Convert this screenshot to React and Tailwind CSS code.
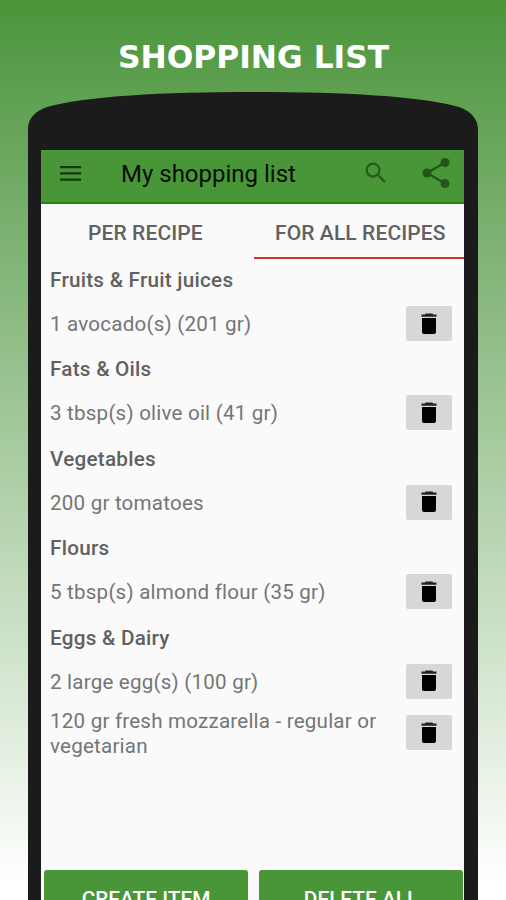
const groups = [
  { title: 'Fruits & Fruit juices', item: '1 avocado(s) (201 gr)' },
  { title: 'Fats & Oils', item: '3 tbsp(s) olive oil (41 gr)' },
  { title: 'Vegetables', item: '200 gr tomatoes' },
  { title: 'Flours', item: '5 tbsp(s) almond flour (35 gr)' },
  { title: 'Eggs & Dairy', item: '2 large egg(s) (100 gr)' },
];

function Trash() {
  return (
    <button className="mb-px flex h-[35px] w-[46px] shrink-0 items-center justify-center rounded-[2px] bg-[#d6d7d7]">
      <svg width="18" height="22" viewBox="0 0 18 22">
        <path d="M2 5h14v14q0 2-2 2H4q-2 0-2-2z" fill="#000" />
        <path d="M5 1.500q0-1 1-1h6q1 0 1 1h3.500V3.800h-15V1.500z" fill="#222" />
      </svg>
    </button>
  );
}

function Row({ children, className }) {
  return (
    <div className={`flex items-center justify-between pr-3 ${className}`}>
      <span className="pt-px text-[20.6px] leading-[25px] tracking-[0.2px] text-[#757575]">{children}</span>
      <Trash />
    </div>
  );
}

export default function App() {
  return (
    <div className="h-[900px] w-[506px] overflow-hidden bg-linear-to-b from-[#4a953a] to-white to-98% font-[Roboto,sans-serif]">
      <h1 className="h-[92px] pt-[39px] pl-[118px] font-['DejaVu_Sans',sans-serif] text-[31.3px] leading-[36px] font-bold whitespace-nowrap text-white">
        SHOPPING LIST
      </h1>
      <div className="ml-[28px] w-[450px]">
        <svg width="450" height="58" viewBox="0 0 450 58" className="block">
          <path d="M0 58V36C0 27 7 19 19 15C58 4 135 0 225 0S392 4 431 15C443 19 450 27 450 38V58Z" fill="#1c1b1c" />
        </svg>
        <div className="h-[750px] bg-[#1c1b1c] pr-[14px] pl-[13px]">
          <div className="flex h-full flex-col bg-[#fafafa]">
            <header className="flex h-[54px] shrink-0 items-center border-b-2 border-[#29850f] bg-[#489638] pl-[19px]">
              <svg width="21" height="15" viewBox="0 0 21 15" className="mt-[-5px]" fill="#16370f">
                <path d="M0 0h21v2.200H0zM0 6.200h21v2.200H0zM0 12.500h21v2.200H0z" />
              </svg>
              <span className="mt-[-4px] ml-[40px] w-[241px] text-[24px] leading-7 whitespace-nowrap text-[#050d03]">My shopping list</span>
              <svg width="28" height="28" viewBox="0 0 24 24" className="mt-[-7px] shrink-0" fill="#265b1b">
                <path d="M15.500 14h-.79l-.28-.27A6.471 6.471 0 0 0 16 9.500 6.500 6.500 0 1 0 9.500 16c1.610 0 3.090-.59 4.230-1.570l.27.280v.79l5 4.990L20.490 19l-4.990-5zm-6 0C7.010 14 5 11.990 5 9.500S7.010 5 9.500 5 14 7.010 14 9.500 11.990 14 9.500 14z" />
              </svg>
              <svg width="28" height="30" viewBox="0 0 28 30" className="mt-[-7px] ml-[32px] shrink-0" fill="#23561a">
                <path d="M23 4.500L5 15l18 10.500" fill="none" stroke="#23561a" strokeWidth="2.2" />
                <circle cx="23" cy="4.500" r="4.500" />
                <circle cx="5" cy="15" r="4.500" />
                <circle cx="23" cy="25.500" r="4.500" />
              </svg>
            </header>
            <nav className="flex h-[55px] shrink-0 text-[21px] leading-[58px] font-medium whitespace-nowrap text-[#616161]">
              <span className="w-[213px] pl-[47px] tracking-[0.1px]">PER RECIPE</span>
              <span className="w-[210px] border-b-2 border-[#d0342f] pl-[21px] tracking-[0.1px]">FOR ALL RECIPES</span>
            </nav>
            <main className="pl-[9px]">
              {groups.map((g) => (
                <section key={g.title} className="h-[89.4px]">
                  <h2 className="h-[41px] pt-px text-[20.7px] leading-[41px] font-medium tracking-[0.25px] text-[#616161]">{g.title}</h2>
                  <Row className="h-[48px]">{g.item}</Row>
                </section>
              ))}
              <Row className="h-[55px]">
                120 gr fresh mozzarella - regular or
                <br />
                vegetarian
              </Row>
            </main>
            <footer className="mt-auto flex h-[30px] gap-[11px] pr-px pl-[3px] text-center text-[20.8px] leading-[58px] font-medium text-white">
              <button className="h-[60px] w-[204px] rounded-[3px] bg-[#489638] pb-0.5">CREATE ITEM</button>
              <button className="h-[60px] w-[204px] rounded-[3px] bg-[#489638] pb-0.5">DELETE ALL</button>
            </footer>
          </div>
        </div>
      </div>
    </div>
  );
}
